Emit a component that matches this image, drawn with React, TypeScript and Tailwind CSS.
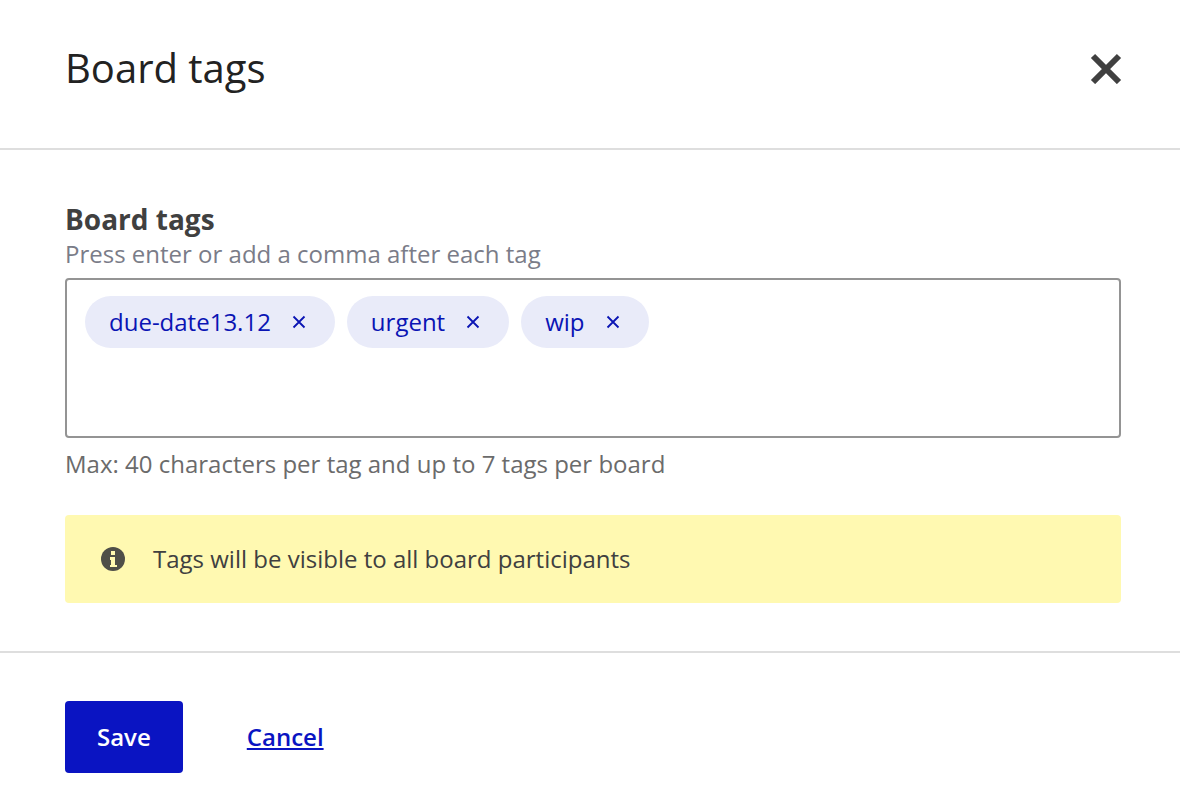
import { useState } from "react";
import type { KeyboardEvent } from "react";

const MAX_TAGS = 7;
const MAX_TAG_LENGTH = 40;

function CloseIcon() {
  return (
    <svg viewBox="0 0 32 32" className="size-8" aria-hidden="true">
      <path d="M3 4 29 30M29 4 3 30" stroke="currentColor" strokeWidth="6" />
    </svg>
  );
}

function InfoIcon() {
  return (
    <svg viewBox="0 0 24 24" className="size-6 shrink-0" aria-hidden="true">
      <circle cx="12" cy="12" r="12" fill="#4f4f48" />
      <path d="M10 4h4v4h-4zM9 10h5v8h2v2H9v-2h1v-5H9z" fill="#fff9b1" />
    </svg>
  );
}

function Tag({ name, onRemove }: { name: string; onRemove: () => void }) {
  return (
    <li className="flex h-[52px] items-center gap-4 rounded-full bg-[#e9ebf9] px-6 text-[#0a14b4]">
      <span>{name}</span>
      <button type="button" aria-label={`Remove ${name}`} onClick={onRemove}>
        <svg viewBox="0 0 24 24" className="size-6" aria-hidden="true">
          <path d="m6.5 6.5 11 11M17.5 6.5l-11 11" stroke="currentColor" strokeWidth="1.8" />
        </svg>
      </button>
    </li>
  );
}

export default function App() {
  const [tags, setTags] = useState(["due-date13.12", "urgent", "wip"]);
  const [draft, setDraft] = useState("");

  function handleKeyDown(e: KeyboardEvent<HTMLInputElement>) {
    if (e.key !== "Enter" && e.key !== ",") return;
    e.preventDefault();
    const name = draft.trim();
    if (name && !tags.includes(name) && tags.length < MAX_TAGS) {
      setTags([...tags, name]);
    }
    setDraft("");
  }

  return (
    <form
      className="min-h-screen bg-white font-['Open_Sans',sans-serif] text-2xl text-[#404040]"
      onSubmit={(e) => e.preventDefault()}
    >
      <header className="flex items-start justify-between border-b-2 border-[#dedede] pt-10 pr-[58px] pb-13 pl-[65px]">
        <h1 className="text-[40px] leading-14 text-[#222]">Board tags</h1>
        <button type="button" aria-label="Close" className="mt-3">
          <CloseIcon />
        </button>
      </header>

      <main className="border-b-2 border-[#dedede] pt-[50px] pr-[59px] pb-12 pl-[65px]">
        <label htmlFor="board-tags" className="block text-[28px] leading-[38px] font-bold">
          Board tags
        </label>
        <p id="tags-hint" className="leading-8 text-[#7a7c88]">
          Press enter or add a comma after each tag
        </p>
        <div className="mt-2 flex min-h-40 flex-wrap content-start gap-3 rounded border-2 border-[#949494] px-[18px] py-4">
          <ul className="flex flex-wrap gap-3">
            {tags.map((name) => (
              <Tag
                key={name}
                name={name}
                onRemove={() => setTags(tags.filter((t) => t !== name))}
              />
            ))}
          </ul>
          <input
            id="board-tags"
            type="text"
            aria-describedby="tags-hint tags-limit"
            className="h-[52px] min-w-40 flex-1 outline-none"
            maxLength={MAX_TAG_LENGTH}
            value={draft}
            onChange={(e) => setDraft(e.target.value)}
            onKeyDown={handleKeyDown}
          />
        </div>
        <p id="tags-limit" className="mt-[10px] leading-8 text-[#6b6b6b]">
          Max: {MAX_TAG_LENGTH} characters per tag and up to {MAX_TAGS} tags per board
        </p>
        <div className="mt-[35px] flex items-center gap-7 rounded bg-[#fff9b1] px-9 py-7">
          <InfoIcon />
          <p className="leading-8">Tags will be visible to all board participants</p>
        </div>
      </main>

      <footer className="flex items-center gap-16 py-12 pr-[59px] pl-[65px] font-semibold">
        <button type="submit" className="h-[72px] rounded bg-[#0a14c2] px-8 text-white">
          Save
        </button>
        <a href="#cancel" className="text-[#0a14c2] underline decoration-2 underline-offset-2">
          Cancel
        </a>
      </footer>
    </form>
  );
}
